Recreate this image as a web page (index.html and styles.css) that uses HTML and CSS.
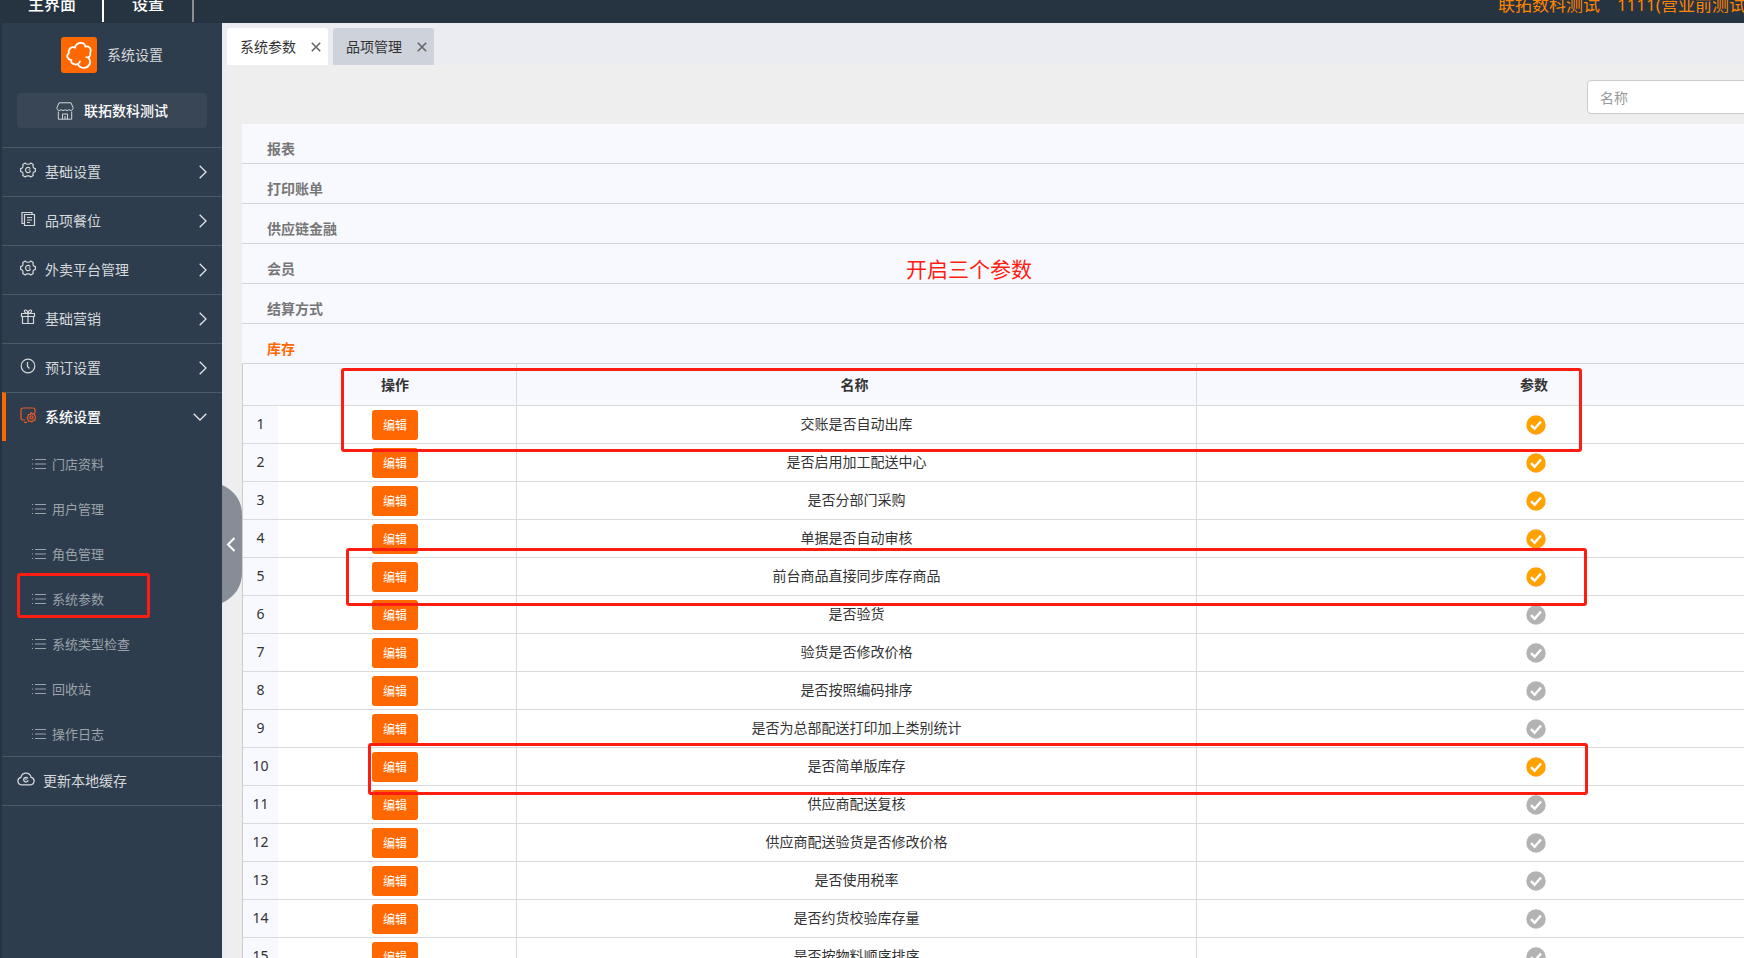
FILE: index.html
```html
<!DOCTYPE html>
<html lang="zh-CN">
<head>
<meta charset="utf-8">
<title>系统参数</title>
<link rel="stylesheet" href="styles.css">
</head>
<body>
<svg class="defs" aria-hidden="true">
  <symbol id="i-gear" viewBox="0 0 16 16"><path d="M5.200 1.100C6.400 2.600 9.600 2.600 10.800 1.100L13.200 2.500C12.500 4.500 13.300 6.200 15.400 6.700V9.300C13.300 9.800 12.500 11.500 13.200 13.500L10.800 14.900C9.600 13.400 6.400 13.400 5.200 14.900L2.800 13.500C3.500 11.500 2.700 9.800.6 9.300V6.700C2.700 6.200 3.500 4.500 2.800 2.500z"/><path d="M10.300 6.600A2.600 2.600 0 1 0 10.500 9M8.500 8h2"/></symbol>
  <symbol id="i-doc" viewBox="0 0 16 16"><path d="M4.500 3.500h10v11h-10zM4.500 12.500h-2.500v-11h10v2M7 6.500h5M7 9h5M7 11.500h3"/></symbol>
  <symbol id="i-gift" viewBox="0 0 16 16"><path d="M1.500 4.500h13v3h-13zM2.500 7.500v7h11v-7M8 4.500v10M8 4.500C4 4.500 3.500 1 5.500 1S8 4.500 8 4.500 8.500 1 10.500 1 12 4.500 8 4.500"/></symbol>
  <symbol id="i-clock" viewBox="0 0 16 16"><circle cx="8" cy="8" r="6.800"/><path d="M7.500 4v4.500l2 2"/></symbol>
  <symbol id="i-screen" viewBox="0 0 16 16"><path d="M5 13H3a2 2 0 0 1-2-2V3a2 2 0 0 1 2-2h10a2 2 0 0 1 2 2v3M4 15.300h3"/><path d="M11 5.800l1.400 1 1.800-.1.500 1.700 1.200 1.400-.9 1.500 0 1.800-1.800.4L11.800 15l-1.600-.9-1.800-.1-.3-1.800-1-1.500 1.100-1.400.3-1.800 1.800-.1z"/><circle cx="11.500" cy="10.400" r="1.500"/></symbol>
  <symbol id="i-cloud" viewBox="0 0 18 14"><path d="M4.500 12.800a3.800 3.800 0 0 1-.6-7.500 5.200 5.200 0 0 1 10.200 0 3.800 3.800 0 0 1-.6 7.500z"/><path d="M11 6.500a2.300 2.300 0 1 0 .2 1.700M9 6.500v1.500"/></symbol>
  <symbol id="i-shop" viewBox="0 0 18 18"><path d="M3 .8h12l2 4.700v1a2.200 2.200 0 0 1-4 1 2.500 2.500 0 0 1-4 0 2.500 2.500 0 0 1-4 0 2.200 2.200 0 0 1-4-1v-1zM2.300 9.500v7.700h13.400V9.500M6.500 17v-5h5v5M9 14v3"/></symbol>
  <symbol id="i-list" viewBox="0 0 14 12"><path d="M0 1.500h1M3 1.500h11M0 6h1M3 6h11M0 10.500h1M3 10.500h11"/></symbol>
  <symbol id="i-right" viewBox="0 0 8 14"><path d="M.7.700 7 7 .7 13.300"/></symbol>
  <symbol id="i-down" viewBox="0 0 14 8"><path d="M.7.700 7 7 13.300.700"/></symbol>
  <symbol id="i-close" viewBox="0 0 10 10"><path d="M.8.800l8.400 8.400M9.200.800.800 9.200"/></symbol>
  <symbol id="i-check" viewBox="0 0 20 20"><circle cx="10" cy="10" r="9.700" fill="currentColor" stroke="none"/><path d="M5 10.200l3.600 3.500 6.400-7.200" stroke="#fff" stroke-width="2.400"/></symbol>
</svg>

<header class="topbar">
  <nav class="topnav"><a href="#">主界面</a><a href="#">设置</a></nav>
  <p class="account"><span>联拓数科测试</span><span>1111(营业前测试)</span></p>
</header>

<div class="layout">
  <aside class="sidebar">
    <div class="brand">
      <svg class="logo" viewBox="0 0 36 36"><rect width="36" height="36" rx="3" fill="#ff6800"/><path d="M19.300 23.800C18.300 26.800 15.500 28.300 13 27 10.800 27 9.800 25 10.300 23 6.500 22.500 4.800 18.600 7.800 16.200 7 12 10.500 9.200 14 10.600 15.500 5 23 4.200 24.500 9.600 28.500 8.600 31 12.500 29.200 16 30 19.500 27.500 21.200 24.500 20M17 27C18.500 31.800 25.800 32.200 28.300 27.800 29.600 25 29 22 26.600 20.300" fill="none" stroke="#fff" stroke-width="1.800"/></svg>
      <span>系统设置</span>
    </div>
    <button class="store" type="button"><svg width="18" height="18"><use href="#i-shop"/></svg>联拓数科测试</button>
    <nav class="menu">
      <a class="item" href="#"><svg class="ico"><use href="#i-gear"/></svg>基础设置<svg class="arrow" width="8" height="14"><use href="#i-right"/></svg></a>
      <a class="item" href="#"><svg class="ico"><use href="#i-doc"/></svg>品项餐位<svg class="arrow" width="8" height="14"><use href="#i-right"/></svg></a>
      <a class="item" href="#"><svg class="ico"><use href="#i-gear"/></svg>外卖平台管理<svg class="arrow" width="8" height="14"><use href="#i-right"/></svg></a>
      <a class="item" href="#"><svg class="ico"><use href="#i-gift"/></svg>基础营销<svg class="arrow" width="8" height="14"><use href="#i-right"/></svg></a>
      <a class="item" href="#"><svg class="ico"><use href="#i-clock"/></svg>预订设置<svg class="arrow" width="8" height="14"><use href="#i-right"/></svg></a>
      <a class="item active" href="#"><svg class="ico"><use href="#i-screen"/></svg>系统设置<svg class="arrow" width="14" height="8"><use href="#i-down"/></svg></a>
      <div class="submenu">
        <a href="#"><svg width="14" height="12"><use href="#i-list"/></svg>门店资料</a>
        <a href="#"><svg width="14" height="12"><use href="#i-list"/></svg>用户管理</a>
        <a href="#"><svg width="14" height="12"><use href="#i-list"/></svg>角色管理</a>
        <a class="marked" href="#"><svg width="14" height="12"><use href="#i-list"/></svg>系统参数</a>
        <a href="#"><svg width="14" height="12"><use href="#i-list"/></svg>系统类型检查</a>
        <a href="#"><svg width="14" height="12"><use href="#i-list"/></svg>回收站</a>
        <a href="#"><svg width="14" height="12"><use href="#i-list"/></svg>操作日志</a>
      </div>
      <a class="item cache" href="#"><svg width="18" height="14"><use href="#i-cloud"/></svg>更新本地缓存</a>
    </nav>
    <button class="collapse" type="button" aria-label="收起菜单">
      <svg width="20" height="118" viewBox="0 0 20 118"><path class="shape" d="M0 0C13 6 20 16 20 30v58c0 13-7 24-20 30z"/><path class="tick" d="M12.500 53 6 59.500l6.500 6.500"/></svg>
    </button>
  </aside>

  <main class="main">
    <div class="tabs">
      <div class="tab current"><a href="#">系统参数</a><button type="button" aria-label="关闭系统参数"><svg width="10" height="10"><use href="#i-close"/></svg></button></div>
      <div class="tab"><a href="#">品项管理</a><button type="button" aria-label="关闭品项管理"><svg width="10" height="10"><use href="#i-close"/></svg></button></div>
    </div>
    <div class="page">
      <div class="search"><input type="text" placeholder="名称" aria-label="名称"></div>
      <div class="sections">
        <button type="button">报表</button>
        <button type="button">打印账单</button>
        <button type="button">供应链金融</button>
        <button type="button">会员</button>
        <button type="button">结算方式</button>
        <button type="button" class="open">库存</button>
        <p class="note">开启三个参数</p>
      </div>
      <div class="grid">
        <table>
          <colgroup><col class="c-no"><col class="c-op"><col class="c-name"><col></colgroup>
          <thead><tr><th class="no"></th><th class="op">操作</th><th>名称</th><th>参数</th></tr></thead>
          <tbody>
            <tr><td class="no">1</td><td class="op"><button type="button">编辑</button></td><td>交账是否自动出库</td><td class="on"><svg><use href="#i-check"/></svg></td></tr>
            <tr><td class="no">2</td><td class="op"><button type="button">编辑</button></td><td>是否启用加工配送中心</td><td class="on"><svg><use href="#i-check"/></svg></td></tr>
            <tr><td class="no">3</td><td class="op"><button type="button">编辑</button></td><td>是否分部门采购</td><td class="on"><svg><use href="#i-check"/></svg></td></tr>
            <tr><td class="no">4</td><td class="op"><button type="button">编辑</button></td><td>单据是否自动审核</td><td class="on"><svg><use href="#i-check"/></svg></td></tr>
            <tr><td class="no">5</td><td class="op"><button type="button">编辑</button></td><td>前台商品直接同步库存商品</td><td class="on"><svg><use href="#i-check"/></svg></td></tr>
            <tr><td class="no">6</td><td class="op"><button type="button">编辑</button></td><td>是否验货</td><td class="off"><svg><use href="#i-check"/></svg></td></tr>
            <tr><td class="no">7</td><td class="op"><button type="button">编辑</button></td><td>验货是否修改价格</td><td class="off"><svg><use href="#i-check"/></svg></td></tr>
            <tr><td class="no">8</td><td class="op"><button type="button">编辑</button></td><td>是否按照编码排序</td><td class="off"><svg><use href="#i-check"/></svg></td></tr>
            <tr><td class="no">9</td><td class="op"><button type="button">编辑</button></td><td>是否为总部配送打印加上类别统计</td><td class="off"><svg><use href="#i-check"/></svg></td></tr>
            <tr><td class="no">10</td><td class="op"><button type="button">编辑</button></td><td>是否简单版库存</td><td class="on"><svg><use href="#i-check"/></svg></td></tr>
            <tr><td class="no">11</td><td class="op"><button type="button">编辑</button></td><td>供应商配送复核</td><td class="off"><svg><use href="#i-check"/></svg></td></tr>
            <tr><td class="no">12</td><td class="op"><button type="button">编辑</button></td><td>供应商配送验货是否修改价格</td><td class="off"><svg><use href="#i-check"/></svg></td></tr>
            <tr><td class="no">13</td><td class="op"><button type="button">编辑</button></td><td>是否使用税率</td><td class="off"><svg><use href="#i-check"/></svg></td></tr>
            <tr><td class="no">14</td><td class="op"><button type="button">编辑</button></td><td>是否约货校验库存量</td><td class="off"><svg><use href="#i-check"/></svg></td></tr>
            <tr><td class="no">15</td><td class="op"><button type="button">编辑</button></td><td>是否按物料顺序排序</td><td class="off"><svg><use href="#i-check"/></svg></td></tr>
          </tbody>
        </table>
        <div class="mark mark-1"></div>
        <div class="mark mark-2"></div>
        <div class="mark mark-3"></div>
      </div>
    </div>
  </main>
</div>
</body>
</html>
```
FILE: styles.css
```css
*, *::before, *::after { box-sizing: border-box; }

body {
  margin: 0;
  height: 100vh;
  overflow: hidden;
  display: flex;
  flex-direction: column;
  background: #263340;
  color: #333;
  font: 14px/20px "Noto Sans", "Noto Sans CJK SC", sans-serif;
}

a { color: inherit; text-decoration: none; }
p { margin: 0; }
button { margin: 0; padding: 0; border: 0; background: none; color: inherit; font: inherit; cursor: pointer; }
svg { flex: none; fill: none; stroke: currentColor; }
.defs { position: absolute; width: 0; height: 0; }

/* top bar */
.topbar {
  flex: none;
  height: 23px;
  overflow: hidden;
  display: flex;
  justify-content: space-between;
  align-items: flex-end;
  background: #263340;
}
.topnav { display: flex; height: 36px; padding-bottom: 1px; }
.topnav a {
  height: 35px;
  padding: 0 26px 0 28px;
  border-right: 2px solid #fff;
  color: #fff;
  font-size: 16px;
  font-weight: 500;
  line-height: 35px;
}
.topnav a:last-child { padding-right: 28px; border-color: #8f8d8f; }
.account {
  display: flex;
  gap: 17px;
  height: 36px;
  margin-right: -7px;
  color: #ff8400;
  font-size: 17px;
  line-height: 35px;
  white-space: nowrap;
}

.layout { flex: 1; min-height: 0; display: flex; }

/* sidebar */
.sidebar {
  position: relative;
  flex: none;
  width: 222px;
  padding-top: 14px;
  border-left: 2px solid #263340;
  background: #2e3d4d;
  color: #d5d8db;
}
.brand { display: flex; justify-content: center; align-items: center; gap: 10px; }
.logo { width: 36px; height: 36px; stroke: none; }
.store {
  display: flex;
  justify-content: center;
  align-items: center;
  gap: 10px;
  width: 190px;
  height: 35px;
  margin: 20px 15px 19px;
  border-radius: 4px;
  background: #384655;
  color: #fff;
  font-weight: 500;
}
.store svg { color: #d5d8db; }
.menu { border-bottom: 1px solid #4b5a67; }
.menu > .item {
  display: flex;
  align-items: center;
  gap: 9px;
  height: 49px;
  padding: 0 15px 0 18px;
  border-top: 1px solid #4b5a67;
}
.ico { width: 16px; height: 16px; margin-bottom: 4px; stroke-width: 1.2; }
.arrow { margin-left: auto; stroke-width: 1.3; color: #e3e6e8; }
.menu > .active { padding-left: 14px; border-left: 4px solid #ff6800; color: #fff; font-weight: 500; }
.active .ico { color: #f05a28; }
.menu > .cache { gap: 8px; padding-left: 15px; }
.cache svg { margin-bottom: 4px; stroke-width: 1.3; }
.submenu { display: flex; flex-direction: column; color: #9aa2aa; font-size: 13px; }
.submenu a { display: flex; align-items: center; gap: 6px; height: 45px; padding-left: 30px; }
.submenu .marked { position: relative; }
.marked::after {
  content: "";
  position: absolute;
  left: 15px;
  top: -3px;
  width: 133px;
  height: 45px;
  border: 3px solid #ff1d12;
  border-radius: 3px;
}
.collapse { position: absolute; left: 100%; top: 462px; z-index: 2; }
.collapse svg { display: block; }
.collapse .shape { fill: #868d97; stroke: none; }
.collapse .tick { stroke: #fff; stroke-width: 2; }

/* main */
.main { flex: 1; min-width: 0; overflow: hidden; border-left: 5px solid #ebecf1; background: #eee; }
.tabs { display: flex; gap: 5px; padding-top: 5px; background: #ebecf1; }
.tab {
  display: flex;
  align-items: center;
  justify-content: space-between;
  width: 101px;
  height: 37px;
  padding: 0 7px 0 13px;
  border-radius: 3px 3px 0 0;
  background: #ced2da;
}
.tab.current { background: #fff; }
.tab button { color: #666; }
.tab svg { display: block; stroke-width: 1.6; }

/* the settings page is wider than the window and is cut off at the right */
.page { width: calc(100% + 132px); padding-left: 15px; }
.search { display: flex; justify-content: flex-end; padding: 15px 0 10px; }
.search input {
  width: 289px;
  height: 34px;
  padding: 0 12px;
  border: 1px solid #ccc;
  border-radius: 4px;
  background: #fff;
  font: inherit;
}
.search input::placeholder { color: #999; opacity: 1; }

.sections { position: relative; display: flex; flex-direction: column; background: #f8f9ff; }
.sections button {
  height: 40px;
  padding: 15px 25px 4px;
  border-bottom: 1px solid #d0d2d6;
  color: #777;
  font-weight: 700;
  text-align: left;
}
.sections .open { color: #ff6800; }
.note {
  position: absolute;
  left: 664px;
  top: 130px;
  color: #ff1d12;
  font-size: 21px;
  line-height: 30px;
}

.grid { position: relative; }
table {
  width: 100%;
  table-layout: fixed;
  border-collapse: separate;
  border-spacing: 0;
  border-left: 1px solid #ccc;
  background: #fff;
}
.c-no { width: 35px; }
.c-op { width: 239px; }
.c-name { width: 680px; }
th, td {
  height: 38px;
  padding: 0;
  border-right: 1px solid #dadadc;
  border-bottom: 1px solid #dadadc;
  text-align: center;
  vertical-align: middle;
}
td { padding-bottom: 2px; }
th { height: 42px; padding-right: 4px; background: #f8f9ff; font-weight: 700; }
.no { border-right: 0; }
td.no { background: #f8f9ff; }
.op { padding: 0 4px 0 0; }
.on, .off { padding: 0; }
.op button {
  display: block;
  width: 46px;
  height: 30px;
  margin: 0 auto;
  padding-top: 2px;
  border-radius: 3px;
  background: #ff6800;
  color: #fff;
  font-size: 12px;
}
td svg { display: block; width: 20px; height: 20px; margin: 0 auto; }
.on { color: #ffa200; }
.off { color: #b3b3b3; }

.mark { position: absolute; border: 3px solid #ff1d12; border-radius: 3px; pointer-events: none; }
.mark-1 { left: 99px; top: 4px; width: 1241px; height: 84px; }
.mark-2 { left: 104px; top: 184px; width: 1241px; height: 58px; }
.mark-3 { left: 126px; top: 379px; width: 1220px; height: 52px; }
```
